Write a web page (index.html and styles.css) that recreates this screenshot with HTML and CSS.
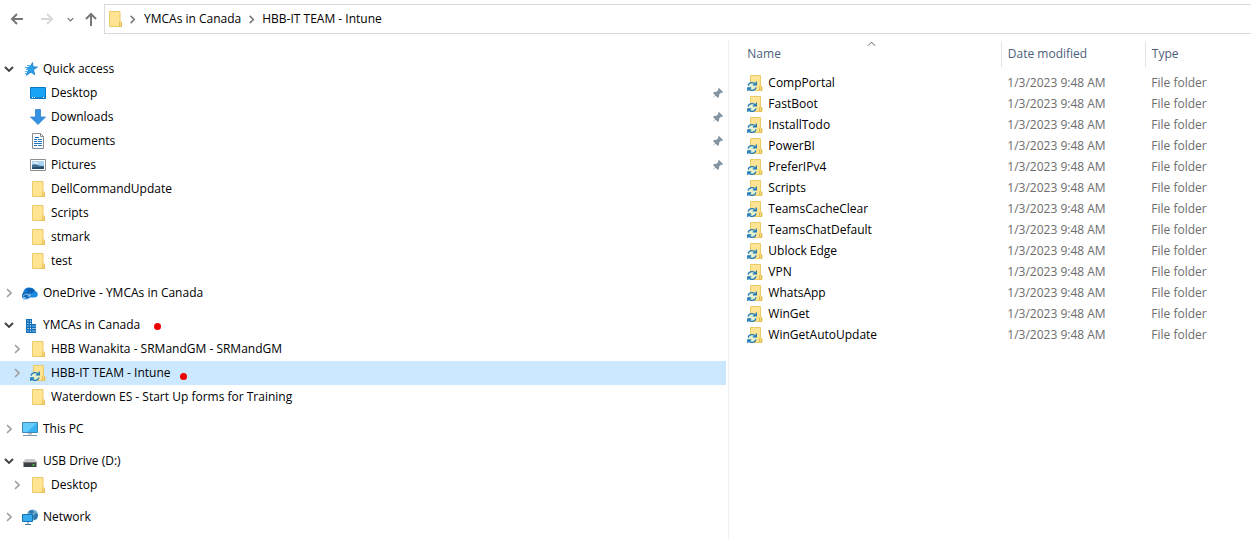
FILE: index.html
```html
<!DOCTYPE html>
<html lang="en">
<head>
<meta charset="utf-8">
<title>HBB-IT TEAM - Intune</title>
<link rel="stylesheet" href="styles.css">
</head>
<body>
<svg class="sprite" aria-hidden="true">
  <symbol id="folder" viewBox="0 0 16 16"><path d="M2.5.5h10.500v10l1.500 1.500v3.500h-12z" fill="#ffe493" stroke="#ebca68"/><path d="M12.500 15.500v-4l1-1 1 1v4z" fill="#fbdc7c" stroke="#e2bd55"/></symbol>
  <symbol id="synced" viewBox="0 0 16 16"><path d="M3.500.5h10v10l1.500 1.500v3.500h-11.500z" fill="#ffe493" stroke="#ebca68"/><path d="M12.500 15.500v-4l1-1 1 1v4z" fill="#fbdc7c" stroke="#e2bd55"/><circle cx="5" cy="11.500" r="4" fill="#e4f2cf"/><g fill="none" stroke="#1f78b8" stroke-width="1.300"><path d="M1 10.500C2 7.200 6.500 6.500 8.500 9.300M9.300 6.500v3.400H5.800M9 12.500c-1 3.300-5.500 4-7.500 1.200M.8 16v-3h3.400"/></g></symbol>
  <symbol id="right" viewBox="0 0 10 10"><path d="M3 1l4 4-4 4" fill="none" stroke="currentColor" stroke-width="1.700"/></symbol>
  <symbol id="down" viewBox="0 0 10 10"><path d="M1 3l4 4 4-4" fill="none" stroke="currentColor" stroke-width="1.900"/></symbol>
  <symbol id="pin" viewBox="0 0 12 12"><path d="M7 1l4 4-1 1-1-.2L7.200 7.600 7 10 6 11 3.700 8.700 1 11l2.200-2.800L1 6l1-1 2.500-.2L6.300 3 6 2z" fill="#8494a1"/></symbol>
  <symbol id="star" viewBox="0 0 16 16"><path d="M10.500 1.500l.6 4.300 4.400.3-4 2.600 1.300 5.100-3.900-2.600-4.600 3.300L6.200 9.600 5 6.500l3-.7z" fill="#2aa0e8" stroke="#1b7fca" stroke-width=".8"/><path d="M5 4.500h4M3 6.500h3M4 8.500h2.500M3 10.500h3M3 12.500h2" stroke="#4eb2ee"/></symbol>
  <symbol id="desktop" viewBox="0 0 16 16"><path d="M.5 2.500h15v11H.5z" fill="#18a3f7" stroke="#0b78c4"/><path d="M1 12.500h14" stroke="#1583cf"/><path d="M2 12.500h1M4 12.500h1M13 12.500h1" stroke="#fff"/></symbol>
  <symbol id="download" viewBox="0 0 16 16"><path d="M5.500.5h5V8h5L8 15.500.5 8h5z" fill="#3593e4" stroke="#237acb" stroke-width=".7"/></symbol>
  <symbol id="document" viewBox="0 0 16 16"><path d="M2.500.5h8l3 3v12h-11z" fill="#fff" stroke="#858b92"/><path d="M10.500.5v3h3" fill="none" stroke="#858b92"/><path d="M4 6.500h3M8 6.500h4M4 8.500h3M8 8.500h4M4 10.500h8M4 12.500h3M8 12.500h4M5 4.500h4" stroke="#1f75c4"/></symbol>
  <symbol id="picture" viewBox="0 0 16 16"><path d="M.5 2.500h15v11H.5z" fill="#fff" stroke="#8b8f94"/><path d="M2 4h12v8H2z" fill="#a9d4f2"/><path d="M2 8c3-2 5 1 12 1v3H2z" fill="#3f6f91"/><path d="M2 10.500c4-1 8-.5 12-.5v2H2z" fill="#244c68"/><path d="M3 6h5" stroke="#fff"/></symbol>
  <symbol id="cloud" viewBox="0 0 16 16"><path d="M1 9.500C1 5 3.500 2.500 7 2.500c3 0 5 1 6 3.500 2 .5 3 2 2.800 3.800-.2 1.700-1.500 2.700-3.300 2.700H7z" fill="#1c8ae0"/><path d="M3 4.500c3-2.500 8.500-2 10 1.500l-4 3z" fill="#0c63b6"/><path d="M0 11c0-3 2-5 4.500-4.500L9 8l-1.500 5-5 1.500C1 14 0 12.800 0 11z" fill="#0b68bd"/><path d="M1.200 11.500c1-3 4.700-3.200 6.300-.9M8 8.500v2.500H5.500M8.500 12.200c-1 2.700-4.500 3-6.300 1M1.500 15.500v-2.700H4" fill="none" stroke="#b7dbf5" stroke-width=".9"/></symbol>
  <symbol id="building" viewBox="0 0 16 16"><path d="M4 2h6v5h4v9H4z" fill="#0f70bd"/><path d="M5.500 4h1M8 4h1M5.500 6.500h1M8 6.500h1M5.500 9h1M8 9h1M10.500 9h1M12.500 9h1M5.500 11.500h1M8 11.500h1M10.500 11.500h1M12.500 11.500h1M5.500 14h1M8 14h1M10.500 14h1M12.500 14h1" stroke="#fff" stroke-width="1.200"/></symbol>
  <symbol id="pc" viewBox="0 0 16 16"><path d="M.5 1.500h15v10H.5z" fill="#37b3f4" stroke="#3e87b2"/><path d="M1 2h14L5 11H1z" fill="#65cbfa"/><path d="M6 12h4v1.500H6z" fill="#b0bdc5"/><path d="M1 14.500h14" stroke="#7a95a7"/></symbol>
  <symbol id="drive" viewBox="0 0 16 16"><path d="M3.500 6h9L15 9H1z" fill="#c7c9cb"/><path d="M1.500 9h13v5h-13z" fill="#3c4044"/><path d="M1.500 9.500h13" stroke="#777"/><path d="M10.500 12h2" stroke="#4ee24e" stroke-width="1.500"/></symbol>
  <symbol id="network" viewBox="0 0 16 16"><circle cx="10.500" cy="6" r="5.500" fill="#6faccd"/><path d="M7 2l3-1 2 2-2 2-3-1zM11 7l3-3 2 2-1 4-3 1z" fill="#2c78ae"/><path d="M.5 5.500h10v7H.5z" fill="#38acf0" stroke="#1973ae"/><path d="M3 15.500h6M6 13v2" stroke="#507d9b"/></symbol>
</svg>

<header class="toolbar">
  <button class="tool back" aria-label="Back"><svg viewBox="0 0 14 14"><path d="M13 7H2M7 2L2 7l5 5"/></svg></button>
  <button class="tool forward" aria-label="Forward" disabled><svg viewBox="0 0 14 14"><path d="M1 7h11M7 2l5 5-5 5"/></svg></button>
  <button class="tool recent" aria-label="Recent locations"><svg viewBox="0 0 10 10"><use href="#down"/></svg></button>
  <button class="tool up" aria-label="Up"><svg viewBox="0 0 14 14"><path d="M7 14V2M2 7l5-5 5 5"/></svg></button>
  <nav class="address" aria-label="Address">
    <svg class="icon"><use href="#folder"/></svg>
    <svg class="sep"><use href="#right"/></svg>
    <a href="#">YMCAs in Canada</a>
    <svg class="sep"><use href="#right"/></svg>
    <a href="#">HBB-IT TEAM - Intune</a>
  </nav>
</header>

<main class="explorer">
  <nav class="tree" aria-label="Folders">
    <section class="group">
      <div class="node"><button class="toggle open" aria-label="Collapse"><svg><use href="#down"/></svg></button><a href="#"><svg class="icon"><use href="#star"/></svg>Quick access</a></div>
      <div class="node child"><a href="#"><svg class="icon"><use href="#desktop"/></svg>Desktop</a><svg class="pin"><use href="#pin"/></svg></div>
      <div class="node child"><a href="#"><svg class="icon"><use href="#download"/></svg>Downloads</a><svg class="pin"><use href="#pin"/></svg></div>
      <div class="node child"><a href="#"><svg class="icon"><use href="#document"/></svg>Documents</a><svg class="pin"><use href="#pin"/></svg></div>
      <div class="node child"><a href="#"><svg class="icon"><use href="#picture"/></svg>Pictures</a><svg class="pin"><use href="#pin"/></svg></div>
      <div class="node child"><a href="#"><svg class="icon"><use href="#folder"/></svg>DellCommandUpdate</a></div>
      <div class="node child"><a href="#"><svg class="icon"><use href="#folder"/></svg>Scripts</a></div>
      <div class="node child"><a href="#"><svg class="icon"><use href="#folder"/></svg>stmark</a></div>
      <div class="node child"><a href="#"><svg class="icon"><use href="#folder"/></svg>test</a></div>
    </section>
    <section class="group">
      <div class="node"><button class="toggle" aria-label="Expand"><svg><use href="#right"/></svg></button><a href="#"><svg class="icon"><use href="#cloud"/></svg>OneDrive - YMCAs in Canada</a></div>
    </section>
    <section class="group">
      <div class="node"><button class="toggle open" aria-label="Collapse"><svg><use href="#down"/></svg></button><a href="#"><svg class="icon"><use href="#building"/></svg>YMCAs in Canada</a><span class="dot dot-site"></span></div>
      <div class="node child"><button class="toggle" aria-label="Expand"><svg><use href="#right"/></svg></button><a href="#"><svg class="icon"><use href="#folder"/></svg>HBB Wanakita - SRMandGM - SRMandGM</a></div>
      <div class="node child selected"><button class="toggle" aria-label="Expand"><svg><use href="#right"/></svg></button><a href="#" aria-current="page"><svg class="icon"><use href="#synced"/></svg>HBB-IT TEAM - Intune</a><span class="dot dot-team"></span></div>
      <div class="node child"><a href="#"><svg class="icon"><use href="#folder"/></svg>Waterdown ES - Start Up forms for Training</a></div>
    </section>
    <section class="group">
      <div class="node"><button class="toggle" aria-label="Expand"><svg><use href="#right"/></svg></button><a href="#"><svg class="icon"><use href="#pc"/></svg>This PC</a></div>
    </section>
    <section class="group">
      <div class="node"><button class="toggle open" aria-label="Collapse"><svg><use href="#down"/></svg></button><a href="#"><svg class="icon"><use href="#drive"/></svg>USB Drive (D:)</a></div>
      <div class="node child"><button class="toggle" aria-label="Expand"><svg><use href="#right"/></svg></button><a href="#"><svg class="icon"><use href="#folder"/></svg>Desktop</a></div>
    </section>
    <section class="group">
      <div class="node"><button class="toggle" aria-label="Expand"><svg><use href="#right"/></svg></button><a href="#"><svg class="icon"><use href="#network"/></svg>Network</a></div>
    </section>
  </nav>

  <section class="files">
    <table>
      <colgroup><col class="col-name"><col class="col-date"><col></colgroup>
      <thead><tr><th scope="col" aria-sort="ascending">Name<svg class="sort" viewBox="0 0 10 6"><path d="M1 5l4-4 4 4"/></svg></th><th scope="col">Date modified</th><th scope="col">Type</th></tr></thead>
      <tbody>
        <tr><td><a href="#"><svg class="icon"><use href="#synced"/></svg>CompPortal</a></td><td>1/3/2023 9:48 AM</td><td>File folder</td></tr>
        <tr><td><a href="#"><svg class="icon"><use href="#synced"/></svg>FastBoot</a></td><td>1/3/2023 9:48 AM</td><td>File folder</td></tr>
        <tr><td><a href="#"><svg class="icon"><use href="#synced"/></svg>InstallTodo</a></td><td>1/3/2023 9:48 AM</td><td>File folder</td></tr>
        <tr><td><a href="#"><svg class="icon"><use href="#synced"/></svg>PowerBI</a></td><td>1/3/2023 9:48 AM</td><td>File folder</td></tr>
        <tr><td><a href="#"><svg class="icon"><use href="#synced"/></svg>PreferIPv4</a></td><td>1/3/2023 9:48 AM</td><td>File folder</td></tr>
        <tr><td><a href="#"><svg class="icon"><use href="#synced"/></svg>Scripts</a></td><td>1/3/2023 9:48 AM</td><td>File folder</td></tr>
        <tr><td><a href="#"><svg class="icon"><use href="#synced"/></svg>TeamsCacheClear</a></td><td>1/3/2023 9:48 AM</td><td>File folder</td></tr>
        <tr><td><a href="#"><svg class="icon"><use href="#synced"/></svg>TeamsChatDefault</a></td><td>1/3/2023 9:48 AM</td><td>File folder</td></tr>
        <tr><td><a href="#"><svg class="icon"><use href="#synced"/></svg>Ublock Edge</a></td><td>1/3/2023 9:48 AM</td><td>File folder</td></tr>
        <tr><td><a href="#"><svg class="icon"><use href="#synced"/></svg>VPN</a></td><td>1/3/2023 9:48 AM</td><td>File folder</td></tr>
        <tr><td><a href="#"><svg class="icon"><use href="#synced"/></svg>WhatsApp</a></td><td>1/3/2023 9:48 AM</td><td>File folder</td></tr>
        <tr><td><a href="#"><svg class="icon"><use href="#synced"/></svg>WinGet</a></td><td>1/3/2023 9:48 AM</td><td>File folder</td></tr>
        <tr><td><a href="#"><svg class="icon"><use href="#synced"/></svg>WinGetAutoUpdate</a></td><td>1/3/2023 9:48 AM</td><td>File folder</td></tr>
      </tbody>
    </table>
  </section>
</main>
</body>
</html>
```
FILE: styles.css
```css
* { box-sizing: border-box; }

body {
  display: flex;
  flex-direction: column;
  min-height: 100vh;
  margin: 0;
  background: #fff;
  color: #000;
  font: 12px/16px "Segoe UI", "Open Sans", sans-serif;
}

a { color: inherit; text-decoration: none; white-space: nowrap; }
svg { display: block; flex: none; }
.sprite { position: absolute; width: 0; height: 0; }
.icon { width: 16px; height: 16px; overflow: visible; }

button {
  display: flex;
  align-items: center;
  justify-content: center;
  padding: 0;
  border: 0;
  background: none;
}

/* Toolbar */
.toolbar { display: flex; align-items: center; padding: 4px 0 6px 10px; }
.tool { height: 30px; color: #777; }
.tool svg { width: 14px; height: 14px; fill: none; stroke: currentColor; stroke-width: 2; }
.back { width: 14px; margin-right: 16px; }
.forward { width: 14px; margin-right: 12px; color: #d8d8d8; }
.recent { width: 8px; margin-right: 10px; }
.recent svg { width: 7px; height: 7px; }
.up { width: 14px; margin-right: 6px; }

.address {
  display: flex;
  flex: 1;
  align-items: center;
  height: 30px;
  padding-left: 2px;
  border: 1px solid #d9d9d9;
  border-right: 0;
}
.sep { width: 9px; height: 9px; margin: 0 6px; color: #777; }
.address .icon + .sep { margin-left: 5px; margin-right: 7px; }

/* Panes */
.explorer { display: flex; flex: 1; }
.tree {
  display: flex;
  flex-direction: column;
  gap: 8px;
  width: 58.3%;
  padding: 17px 2px 10px 0;
  border-right: 1px solid #f0f0f0;
}

.node { position: relative; display: flex; align-items: center; height: 24px; padding-left: 22px; }
.node.child { padding-left: 30px; }
.node.selected { background: #cce8ff; }
.node a { display: flex; align-items: center; gap: 5px; }
.toggle { width: 18px; height: 24px; margin-left: -22px; margin-right: 4px; color: #a0a0a0; }
.toggle.open { color: #404040; }
.toggle svg { width: 10px; height: 10px; }
.pin { width: 12px; height: 12px; margin-left: auto; margin-right: 2px; }

.dot { position: absolute; width: 7px; height: 7px; border-radius: 50%; background: #ed0000; }
.dot-site { top: 10px; left: 154px; }
.dot-team { top: 12px; left: 180px; }

/* File list */
.files { flex: 1; min-width: 0; padding: 1px 0 0 12px; }
table { width: 100%; table-layout: fixed; border-collapse: collapse; }
.col-name { width: 260px; }
.col-date { width: 144px; }
th, td { padding: 0 6px; text-align: left; white-space: nowrap; }
th {
  position: relative;
  height: 26px;
  border-right: 1px solid #e5e5e5;
  color: #4c607a;
  font-weight: 400;
}
th:last-child { border-right: 0; }
.sort { position: absolute; top: 0; left: 50%; width: 9px; height: 6px; margin-left: -4px; fill: none; stroke: #555; }
td { height: 21px; color: #6d6d6d; }
td a { display: flex; align-items: center; gap: 5px; color: #000; }
tbody::before { content: ""; display: block; height: 5px; }
```
